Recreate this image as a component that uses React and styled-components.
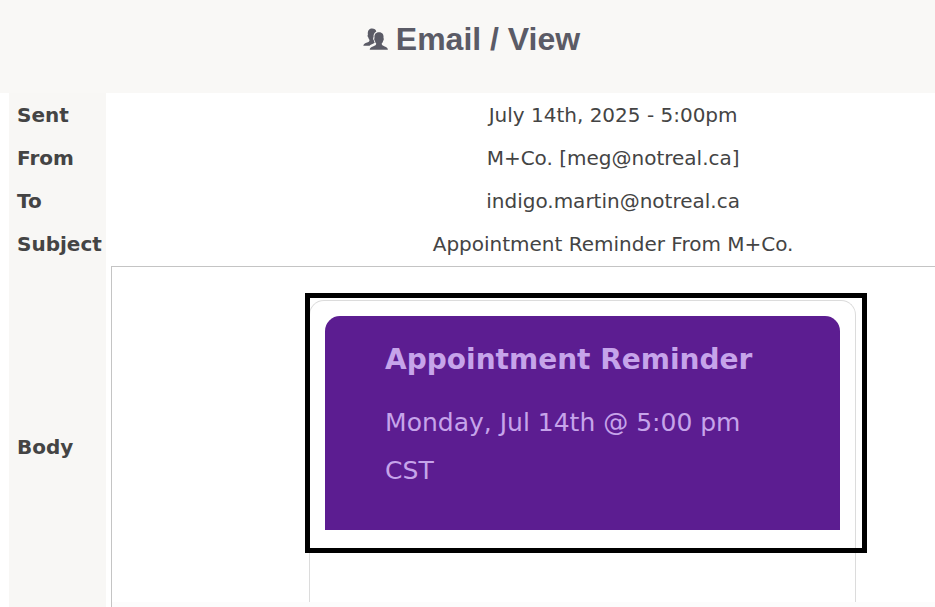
import styled, { createGlobalStyle } from "styled-components";

const GlobalStyle = createGlobalStyle`
  * {
    box-sizing: border-box;
  }

  body {
    margin: 0;
    background: #fff;
    color: #444;
    font-family: Verdana, "DejaVu Sans", sans-serif;
    font-size: 20px;
  }
`;

const Page = styled.div`
  height: 100vh;
  overflow: hidden;
`;

const Header = styled.header`
  display: flex;
  justify-content: center;
  padding: 19px 0 34px 8px;
  background: #f9f8f6;
`;

const Title = styled.h1`
  display: flex;
  align-items: center;
  gap: 8px;
  margin: 0;
  color: #5b5b66;
  font-family: Arial, "Liberation Sans", sans-serif;
  font-size: 32px;
  line-height: 40px;
`;

const Main = styled.main`
  padding-left: 9px;
`;

// wider than the page, the right side runs off the window
const Details = styled.table`
  width: 120%;
  table-layout: fixed;
  border-collapse: collapse;
`;

const Label = styled.th`
  width: 97px;
  height: 43px;
  padding: 0 8px;
  background: #f8f7f5;
  text-align: left;
  white-space: nowrap;
`;

const Value = styled.td`
  padding: 0;
  text-align: center;
`;

const BodyValue = styled(Value)`
  padding: 1px 66px 0 5px;
  text-align: left;
`;

const Preview = styled.div`
  height: 362px;
  overflow: hidden;
  display: flex;
  flex-direction: column;
  border: 1px solid #c4c4c4;
`;

const PreviewContent = styled.div`
  flex: 1;
  display: flex;
  justify-content: center;
  padding-top: 33px;
`;

const ScrollTrack = styled.div`
  height: 25px;
  background: #fcfcfc;
`;

const Card = styled.article`
  position: relative;
  width: 547px;
  padding: 15px;
  border: 1px solid #dcdcdc;
  border-bottom: none;
  border-radius: 15px 15px 0 0;
`;

const Outline = styled.div`
  position: absolute;
  top: -8px;
  left: -5px;
  right: -12px;
  height: 260px;
  border: 5px solid #000;
  pointer-events: none;
`;

const Banner = styled.div`
  padding: 20px 60px 35px;
  border-radius: 15px 15px 0 0;
  background: #5c1d91;
  color: #c6a4ea;
`;

const BannerTitle = styled.h2`
  margin: 0 0 15px;
  font-size: 28px;
  line-height: 48px;
`;

const BannerText = styled.p`
  margin: 0;
  font-size: 25px;
  line-height: 48px;
`;

const UsersIcon = () => (
  <svg width="25" height="22" viewBox="0 0 25 22" fill="#5b5b66" aria-hidden="true">
    <path d="M9 .5C11.4.5 13 1.700 13.300 3.600C11.300 4.800 10.300 6.800 10.600 9C9.900 9.900 10 11.700 10.900 12.600C11 13.500 11.300 14.100 11.700 14.600C11.400 15.400 9.800 15.800 8.300 16.500C7.500 16.900 7 17.300 6.600 17.800H.3C.5 16 1.600 15.400 3.400 14.700C5.700 13.900 6.500 13.400 6.500 11.900C5.900 11.200 5.500 10.400 5.300 9.400C4.500 8.800 4.300 7.300 4.900 6.700C4.400 3 5.900.5 9 .5Z" />
    <path d="M16 4.300C19.400 4.300 21 6.600 20.500 10.100C21.100 10.800 20.800 12.300 20.100 12.900C19.900 14 19.400 14.900 18.700 15.600C18.700 17.100 19.500 17.600 21.700 18.400C23.600 19.100 24.700 19.800 24.900 21.700H6.700C6.900 19.800 8 19.100 10 18.400C12.300 17.600 13.200 17.100 13.200 15.600C12.600 14.900 12.100 14 11.900 12.900C11.200 12.300 10.900 10.800 11.500 10.100C11 6.600 12.600 4.300 16 4.300Z" />
  </svg>
);

const fields = [
  { label: "Sent", value: "July 14th, 2025 - 5:00pm" },
  { label: "From", value: "M+Co. [meg@notreal.ca]" },
  { label: "To", value: "indigo.martin@notreal.ca" },
  { label: "Subject", value: "Appointment Reminder From M+Co." },
];

const App = () => {
  return (
    <Page>
      <GlobalStyle />
      <Header>
        <Title>
          <UsersIcon />
          Email / View
        </Title>
      </Header>
      <Main>
        <Details>
          <tbody>
            {fields.map((field) => (
              <tr key={field.label}>
                <Label scope="row">{field.label}</Label>
                <Value>{field.value}</Value>
              </tr>
            ))}
            <tr>
              <Label scope="row">Body</Label>
              <BodyValue>
                <Preview>
                  <PreviewContent>
                    <Card>
                      <Banner>
                        <BannerTitle>Appointment Reminder</BannerTitle>
                        <BannerText>Monday, Jul 14th @ 5:00 pm CST</BannerText>
                      </Banner>
                      <Outline />
                    </Card>
                  </PreviewContent>
                  <ScrollTrack />
                </Preview>
              </BodyValue>
            </tr>
          </tbody>
        </Details>
      </Main>
    </Page>
  );
};

export default App;
